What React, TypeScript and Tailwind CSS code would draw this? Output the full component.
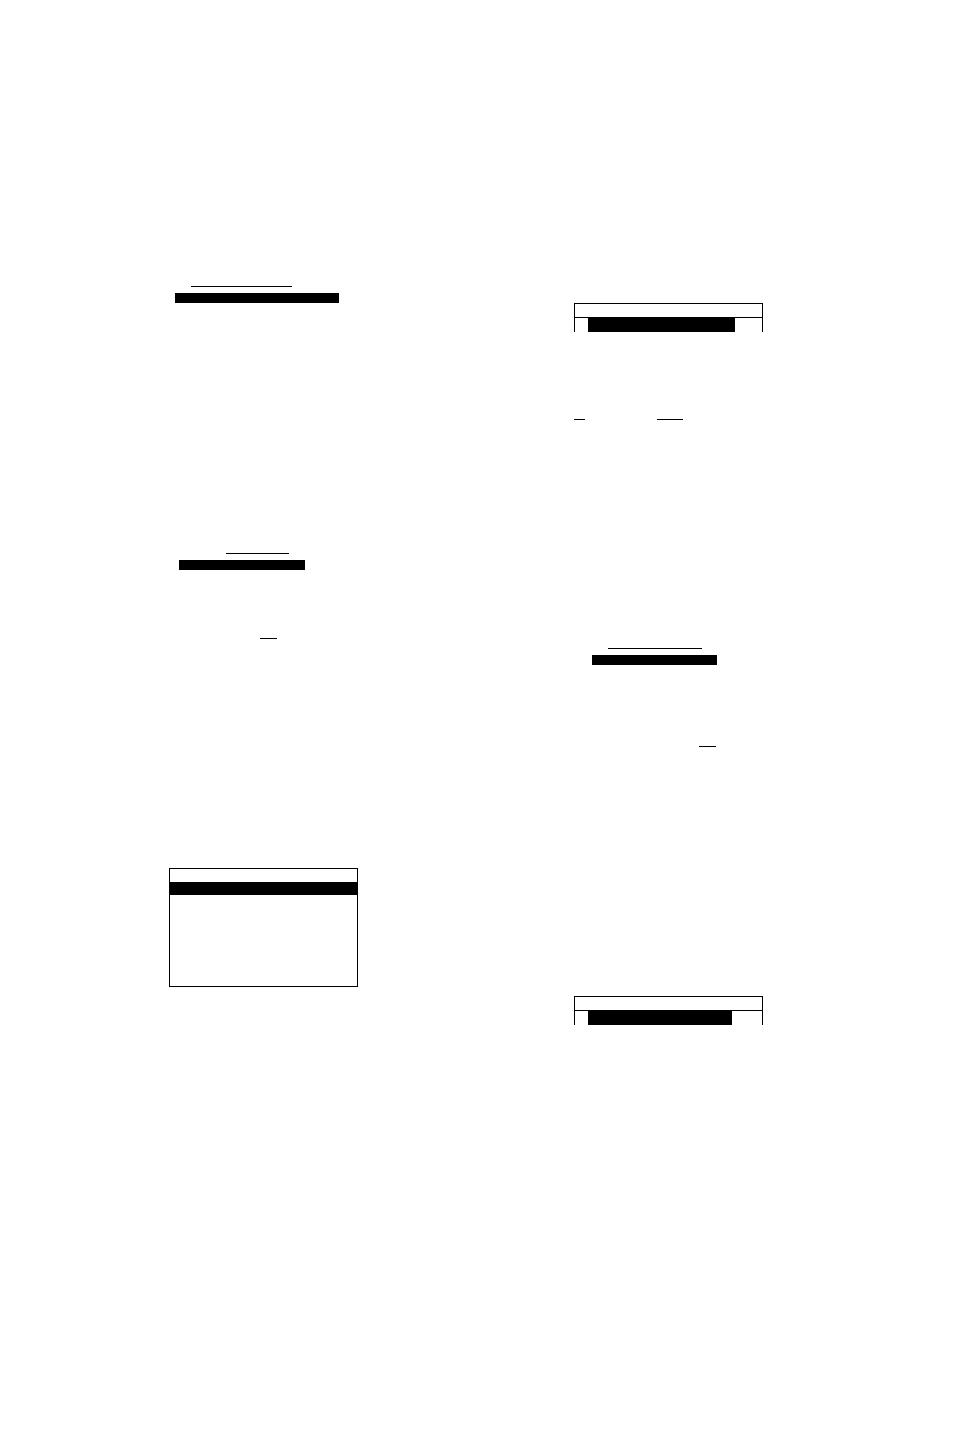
import React from 'react'

// underlined title with the solid bar below it
function Heading({ className, line, bar }: { className: string; line: string; bar: string }) {
  return (
    <div className={className}>
      <div className={`h-px bg-black ${line}`} />
      <div className={`mt-[6px] h-[10px] bg-black ${bar}`} />
    </div>
  )
}

// top part of a menu screen, open at the bottom
function MenuTop({ className, bar }: { className: string; bar: string }) {
  return (
    <div className={`w-[189px] border-x border-t border-black ${className}`}>
      <div className="h-[13px]" />
      <div className="h-[15px] border-t border-black pl-[13px]">
        <div className={`h-[14px] bg-black ${bar}`} />
      </div>
    </div>
  )
}

function App() {
  return (
    <main className="grid min-h-screen grid-cols-[405fr_189fr] items-start bg-white pt-[286px] pr-[191px] pb-16 pl-[169px]">
      {/* left column */}
      <section>
        <Heading className="pl-[6px]" line="ml-4 w-[101px]" bar="w-[164px]" />
        <Heading className="mt-[250px] pl-[10px]" line="ml-[47px] w-[63px]" bar="w-[126px]" />
        <div className="mt-[68px] ml-[91px] h-px w-[17px] bg-black" />

        {/* full menu screen */}
        <div className="mt-[229px] h-[119px] w-[189px] border border-black pt-[13px]">
          <div className="h-[13px] bg-black" />
        </div>
      </section>

      {/* right column */}
      <section className="pt-[17px]">
        <MenuTop className="" bar="w-[147px]" />
        <div className="mt-[87px] flex gap-[72px]">
          <div className="h-px w-[11px] bg-black" />
          <div className="h-px w-[26px] bg-black" />
        </div>
        <Heading className="mt-[228px] pl-[18px]" line="ml-4 w-[94px]" bar="w-[125px]" />
        <div className="mt-[81px] ml-[125px] h-px w-[17px] bg-black" />
        <MenuTop className="mt-[249px]" bar="w-[144px]" />
      </section>
    </main>
  )
}

export default App
